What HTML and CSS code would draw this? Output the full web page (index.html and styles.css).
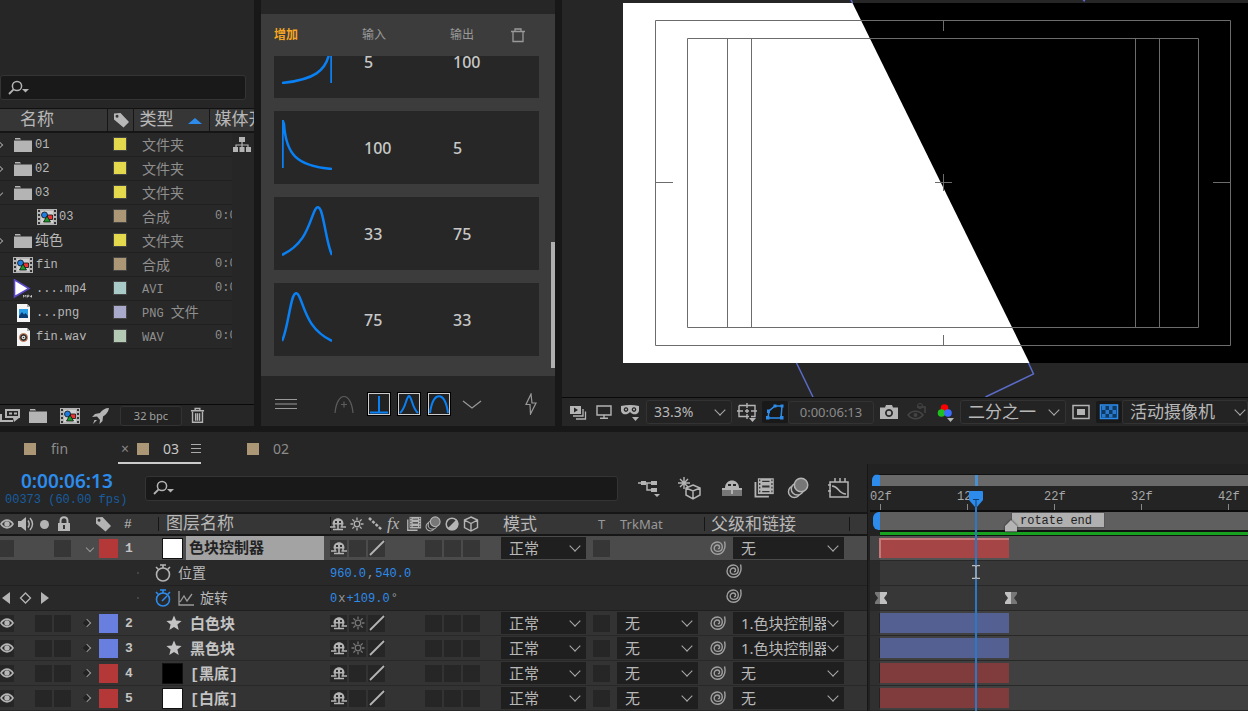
FILE: index.html
```html
<!DOCTYPE html>
<html lang="zh-CN">
<head>
<meta charset="utf-8">
<title>03</title>
<link rel="stylesheet" href="styles.css">
</head>
<body>
<svg class="defs" aria-hidden="true">
  <symbol id="i-search" viewBox="0 0 24 18"><circle cx="10" cy="7" r="4.6" fill="none" stroke="currentColor" stroke-width="1.5"/><path d="M6.6 10.4 2 15" stroke="currentColor" stroke-width="1.8"/><path d="M15 10h7l-3.500 3.500z" fill="currentColor"/></symbol>
  <symbol id="i-tag" viewBox="0 0 18 18"><path fill="currentColor" fill-rule="evenodd" d="M2 2.500 8.500 2 17 11l-5.500 5.500L2 8.500zM5 3.800a1.500 1.500 0 1 0 .01 3 1.500 1.500 0 0 0-.01-3z"/></symbol>
  <symbol id="i-folder" viewBox="0 0 18 16"><path fill="currentColor" d="M1 1h5l1 1.500H1zM0 3.500h18V15H0z"/></symbol>
  <symbol id="i-comp" viewBox="0 0 20 16"><path fill="#b4b4b4" d="M0 0h20v16H0z"/><path stroke="#333" stroke-width="2" stroke-dasharray="2 2" d="M2 1v15M18 1v15"/><path fill="#d0d0d0" d="M4 2h12v12H4z"/><circle cx="7.500" cy="6" r="3" fill="#1e7be0" stroke="#111" stroke-width=".8"/><path fill="#e33" stroke="#111" stroke-width=".8" d="M10.500 6h5v4.500h-5z"/><path fill="#1b9a2c" stroke="#111" stroke-width=".8" d="m10 7 3.500 6h-7z"/></symbol>
  <symbol id="i-flow" viewBox="0 0 18 18"><path fill="currentColor" d="M6 1h6v5H6zM0 11h5v5H0zM6.500 11h5v5h-5zM13 11h5v5h-5z"/><path fill="none" stroke="currentColor" stroke-width="1.200" d="M9 5v6M3 12V9h12v3"/></symbol>
  <symbol id="i-trash" viewBox="0 0 16 18"><path fill="none" stroke="currentColor" stroke-width="1.500" d="M1 4h14M5.500 3.500V1.500h5v2M2.700 5v11.200h10.600V5M6 6.500v8M8 6.500v8M10.200 6.500v8"/></symbol>
  <symbol id="i-eye" viewBox="0 0 16 14"><path fill="currentColor" fill-rule="evenodd" d="M1 7C4.500.8 11.500.8 15 7c-3.500 6.200-10.500 6.200-14 0zm2 0c3 4 7 4 10 0-3-4-7-4-10 0z"/><circle cx="8" cy="7" r="2.700" fill="currentColor"/></symbol>
  <symbol id="i-shy" viewBox="0 0 16 16"><path fill="currentColor" d="M2.500 8.500C2 0 14 0 13.500 8.500z"/><path fill="#303030" d="M5 5h2v2H5zM9 5h2v2H9z"/><path fill="none" stroke="currentColor" stroke-width="1.600" d="M8 8v6M0 11h5.500M10.500 11H16M3 13.500h10M4 8v3M12 8v3"/></symbol>
  <symbol id="i-sun" viewBox="0 0 16 16"><circle cx="8" cy="8" r="2.800" fill="none" stroke="currentColor" stroke-width="1.300"/><path stroke="currentColor" stroke-width="1.300" d="M8 1.500v2.500M8 12v2.500M1.500 8H4M12 8h2.500M3.400 3.400l1.800 1.800M10.800 10.800l1.800 1.800M3.400 12.600l1.800-1.800M10.800 5.200l1.800-1.800"/></symbol>
  <symbol id="i-slash" viewBox="0 0 16 16"><path stroke="currentColor" stroke-width="1.800" d="M1 15 15 1"/></symbol>
  <symbol id="i-frame" viewBox="0 0 18 18"><path fill="none" stroke="currentColor" stroke-width="1.500" d="M2 4v12h11"/><path fill="currentColor" d="M4 1h13v13H4z"/><path fill="#333" d="M7.500 3h6v1h-6zM7.500 7h6v1.500h-6zM7.500 11.500h6v1h-6z"/><path stroke="#333" stroke-width="1" stroke-dasharray="1.500 1.500" d="M5.500 2v11M15.500 2v11"/></symbol>
  <symbol id="i-blur" viewBox="0 0 18 18"><circle cx="6" cy="12" r="4.800" fill="#333" stroke="currentColor" stroke-width="1.200"/><circle cx="8.500" cy="9.800" r="5" fill="#333" stroke="currentColor" stroke-width="1.200"/><circle cx="11.500" cy="6.500" r="5.500" fill="#777" stroke="currentColor" stroke-width="1.200"/></symbol>
  <symbol id="i-cube" viewBox="0 0 16 16"><path fill="none" stroke="currentColor" stroke-width="1.400" d="M8 1l6.500 3v7.500L8 15l-6.500-3.500V4zM1.500 4 8 7.500 14.500 4M8 7.500V15"/></symbol>
  <symbol id="i-whip" viewBox="0 0 16 16"><path fill="none" stroke="currentColor" stroke-width="1.400" d="M14.500 1.500C16.500 9 12.500 14.300 7.500 14.300 3.800 14.300 1 11.700 1 8.200 1 4.500 4 2 7.300 2c3 0 5 2.200 5 5 0 2.800-2 4.400-4.400 4.400-2.300 0-3.700-1.500-3.700-3.200 0-1.900 1.400-3.200 3.100-3.200 1.400 0 2.300 1 2.300 2.200 0 1-.7 1.600-1.700 1.600"/></symbol>
  <symbol id="i-star" viewBox="0 0 16 16"><path fill="currentColor" d="m8 .5 2.100 5.100 5.500.4-4.200 3.600 1.300 5.400L8 12.100 3.300 15l1.300-5.400L.4 6l5.500-.4z"/></symbol>
  <symbol id="i-watch" viewBox="0 0 18 20"><circle cx="9" cy="11.500" r="6.500" fill="none" stroke="currentColor" stroke-width="1.600"/><path stroke="currentColor" stroke-width="1.600" d="M6 2h6M9 2v3M2 4l2.200 2.200M13.800 6.200 16 4"/></symbol>
</svg>

<div class="app">
  <div class="upper">
    <section class="project">
      <label class="search project-search"><svg class="ic-search"><use href="#i-search"/></svg><input type="text" aria-label="搜索"></label>
      <table class="files">
        <colgroup><col class="c-name"><col class="c-tag"><col class="c-type"><col class="c-media"><col class="c-side"></colgroup>
        <thead><tr>
          <th class="h-name">名称</th>
          <th class="h-tag"><svg class="s18"><use href="#i-tag"/></svg></th>
          <th class="h-type">类型<i class="sort"></i></th>
          <th class="h-media" colspan="2">媒体开</th>
        </tr></thead>
        <tbody>
          <tr><td><div class="file"><i class="tw right"></i><svg class="folder"><use href="#i-folder"/></svg>01</div></td><td><i class="sw yellow"></i></td><td class="type">文件夹</td><td></td><td class="side"><svg class="s18"><use href="#i-flow"/></svg></td></tr>
          <tr><td><div class="file"><i class="tw right"></i><svg class="folder"><use href="#i-folder"/></svg>02</div></td><td><i class="sw yellow"></i></td><td class="type">文件夹</td><td></td><td class="side"></td></tr>
          <tr><td><div class="file"><i class="tw down"></i><svg class="folder"><use href="#i-folder"/></svg>03</div></td><td><i class="sw yellow"></i></td><td class="type">文件夹</td><td></td><td class="side"></td></tr>
          <tr><td><div class="file child"><svg class="comp"><use href="#i-comp"/></svg>03</div></td><td><i class="sw tan"></i></td><td class="type">合成</td><td class="media">0:0</td><td class="side"></td></tr>
          <tr><td><div class="file han"><i class="tw right"></i><svg class="folder"><use href="#i-folder"/></svg>纯色</div></td><td><i class="sw yellow"></i></td><td class="type">文件夹</td><td></td><td class="side"></td></tr>
          <tr><td><div class="file item"><svg class="comp"><use href="#i-comp"/></svg>fin</div></td><td><i class="sw tan"></i></td><td class="type">合成</td><td class="media">0:0</td><td class="side"></td></tr>
          <tr><td><div class="file item"><svg class="media-ic" viewBox="0 0 20 20"><path d="M1.500 .800v17L16 9.500z" fill="#fff" stroke="#5a48c8" stroke-width="1.600"/><path d="M10 15.500h9v3.500h-9z" fill="#222"/><path d="M10.500 18.500v-2.500l1.300 1.500 1.200-1.500v2.500M14.500 18.500v-2.300h1.500v1.200h-1.500M18.500 18.500v-2.300l-1.300 1.500h1.800" fill="none" stroke="#ddd" stroke-width=".7"/></svg>....mp4</div></td><td><i class="sw aqua"></i></td><td class="type latin">AVI</td><td class="media">0:0</td><td class="side"></td></tr>
          <tr><td><div class="file item"><svg class="media-ic" viewBox="0 0 20 20"><path d="M4 1h10l3 3v15H4z" fill="#f5f5f5"/><path d="M14 1v3h3" fill="#aaa"/><path d="M6 6h9v9H6z" fill="#2a9fe8"/><path d="m6 13 3-4 2 2.500 1.500-1.500L15 13v2H6z" fill="#0b3d75"/></svg>...png</div></td><td><i class="sw lilac"></i></td><td class="type latin">PNG <span class="han">文件</span></td><td></td><td class="side"></td></tr>
          <tr><td><div class="file item"><svg class="media-ic" viewBox="0 0 20 20"><path d="M4 1h10l3 3v15H4z" fill="#f5f5f5"/><path d="M14 1v3h3" fill="#aaa"/><circle cx="10.500" cy="10.500" r="4" fill="#333" stroke="#d9805c" stroke-width="1"/><circle cx="10.500" cy="10.500" r="1.800" fill="#eee"/><circle cx="10.500" cy="10.500" r=".8" fill="#333"/></svg>fin.wav</div></td><td><i class="sw mint"></i></td><td class="type latin">WAV</td><td class="media">0:0</td><td class="side"></td></tr>
        </tbody>
      </table>
      <footer class="project-foot">
        <button class="pf w19" aria-label="解释素材"><svg class="s20" viewBox="0 0 20 18"><path fill="none" stroke="currentColor" stroke-width="2" d="M6 3h13v7H6zM9 6.500h3M14 6.500h3M1 7v7h12"/><path d="M13 11h6l-5 4z" fill="currentColor"/></svg></button>
        <button class="pf w37" aria-label="新建文件夹"><svg class="folder"><use href="#i-folder"/></svg></button>
        <button class="pf w25" aria-label="新建合成"><svg class="comp"><use href="#i-comp"/></svg></button>
        <button class="pf w37" aria-label="调整"><svg class="s18" viewBox="0 0 18 18"><path fill="currentColor" d="M17 1c-4 0-7 2-9 5L3 7 0 10l5-.5 3 3.500-.5 4 3-3 .5-4.500C14 7.500 16.500 5 17 1zM5 13l-4 4 1.500-4z"/></svg></button>
        <button class="bpc">32 bpc</button>
        <button class="pf w31" aria-label="删除"><svg class="trash"><use href="#i-trash"/></svg></button>
      </footer>
    </section>

    <section class="ease">
      <header class="ease-head"><button class="add">增加</button><span>输入</span><span>输出</span><button class="bin" aria-label="清除"><svg class="s18" viewBox="0 0 18 18"><path fill="none" stroke="currentColor" stroke-width="1.300" d="M2 5.500h14M6 5V3h6v2M4 6v9.500h10V6"/></svg></button></header>
      <div class="ease-list">
        <div class="card"><svg class="curve" viewBox="0 0 50 50"><path d="M0 49C30 46 46 38 48 14L49.500 0V49"/></svg><span>5</span><span>100</span></div>
        <div class="card"><svg class="curve" viewBox="0 0 50 50"><path d="M.5 48V0L2 4C4 34 14 46 50 49"/></svg><span>100</span><span>5</span></div>
        <div class="card"><svg class="curve" viewBox="0 0 50 50"><path d="M0 49C25 37 27 16 33 4q3-6 6 1C43 17 45 39 50 49"/></svg><span>33</span><span>75</span></div>
        <div class="card"><svg class="curve" viewBox="0 0 50 50"><path d="M0 49C5 39 7 17 11 5q3-7 6-1C23 16 25 37 50 49"/></svg><span>75</span><span>33</span></div>
        <i class="thumb"></i>
      </div>
      <footer class="ease-foot">
        <button class="ef w50" aria-label="菜单"><svg class="s22" viewBox="0 0 22 22"><path stroke="currentColor" stroke-width="1.200" d="M0 6.500h22M0 11h22M0 15.500h22"/></svg></button>
        <button class="ef w66 dim" aria-label="添加曲线"><svg class="s22" viewBox="0 0 22 22"><path fill="none" stroke="currentColor" stroke-width="1.200" d="M2 20C4 -2 18 -2 20 20M11 8.500v6M8 11.500h6"/></svg></button>
        <button class="preset" aria-label="预设一"><svg viewBox="0 0 20 20"><path d="M10 2v17M1 18.500h18"/></svg></button>
        <button class="preset" aria-label="预设二"><svg viewBox="0 0 20 20"><path d="M1 19C7 14 7 3 10 2c3 1 3 12 9 17"/></svg></button>
        <button class="preset" aria-label="预设三"><svg viewBox="0 0 20 20"><path d="M1 19C4-3.500 16-3.500 19 19"/></svg></button>
        <button class="ef w40" aria-label="更多"><svg class="s22" viewBox="0 0 22 22"><path fill="none" stroke="currentColor" stroke-width="1.200" d="m2 8 9 7 9-7"/></svg></button>
        <button class="ef bolt" aria-label="应用"><svg class="s22" viewBox="0 0 22 22"><path fill="none" stroke="currentColor" stroke-width="1.200" d="M11 1 6 11.500h4l.5 9.500L16 10h-4z"/></svg></button>
      </footer>
    </section>

    <section class="viewer">
      <svg class="stage">
        <rect x="61" y="3" width="100%" height="360" fill="#fff"/>
        <path d="M290.500 3 467.500 363H2000V3z" fill="#000"/>
        <g fill="none" stroke="#6c6c6c">
          <path d="M93.500 20.500h575v325h-575zM125.500 38.500h511v289h-511zM165.500 38.500v289M189.500 38.500v289M573.500 38.500v289M597.500 38.500v289"/>
          <path d="M381.500 21v10M381.500 335v10M94 182.500h17M651 182.500h17M373 182.500h17M381.500 174v17"/>
        </g>
        <path d="m234.500 363 16.500 34M466.500 363l5 11-48 23M290.500 3 289 0M521 0l2 1" fill="none" stroke="#5a6bc8" stroke-width="1.500"/>
      </svg>
      <footer class="view-foot">
        <button class="vf w32" aria-label="始终预览"><svg class="s18" viewBox="0 0 18 18"><path fill="currentColor" fill-rule="evenodd" d="M1 3h11v8H1zM5 4.500v5l4-2.500z"/><path fill="none" stroke="currentColor" stroke-width="1.300" d="M14 6v7H4M16.500 8.500V16H7"/></svg></button>
        <button class="vf w20" aria-label="主查看器"><svg class="s18" viewBox="0 0 18 18"><path fill="none" stroke="currentColor" stroke-width="1.400" d="M2 3h14v9H2zM5 15.300h8M9 12v3"/></svg></button>
        <button class="vf w32" aria-label="蒙版"><svg class="s20" viewBox="0 0 20 20"><path fill="currentColor" fill-rule="evenodd" d="M1 4q9-2 18 0v5c-1 4-6 4.500-9 1-3 3.500-8 3-9-1zm5 1.300a2.300 2.300 0 1 0 .01 0zm8 0a2.300 2.300 0 1 0 .01 0z"/><circle cx="6" cy="7.600" r="1" fill="currentColor"/><circle cx="14" cy="7.600" r="1" fill="currentColor"/><path fill="currentColor" d="M12 15h7l-3.500 4z"/></svg></button>
        <span class="drop vdrop w86"><select aria-label="缩放"><option>33.3%</option></select></span>
        <button class="vf w30" aria-label="网格"><svg class="s20" viewBox="0 0 20 20"><path fill="none" stroke="currentColor" stroke-width="1.400" d="M2 3.500h16v11h-4M2 3.500v11h10M10 1v5M10 12v5M0 9h6M14 9h6M8 9h4M10 7v4"/><path fill="currentColor" d="M12 16h7l-3.500 4z"/></svg></button>
        <button class="vf w26 on" aria-label="蒙版路径"><svg class="s20" viewBox="0 0 20 20"><path fill="none" stroke="currentColor" stroke-width="1.500" d="M3 16 4 9l6-5h7l-1 12z"/><path fill="currentColor" d="M1 14h3.500v3.500H1zM2 7.500h3V11H2zM8.500 2.500h3v3h-3zM15.500 2.500h3v3h-3zM15 14h3.500v3.500H15z"/></svg></button>
        <button class="time">0:00:06:13</button>
        <button class="vf w30" aria-label="快照"><svg class="s20" viewBox="0 0 20 20"><path fill="currentColor" fill-rule="evenodd" d="M1 5.500h5L7 3h6l1 2.500h5V17H1zM10 7a4 4 0 1 0 .01 0z"/><circle cx="10" cy="11" r="2.300" fill="currentColor"/></svg></button>
        <button class="vf w26 faint" aria-label="显示快照"><svg class="s20" viewBox="0 0 20 20"><path fill="none" stroke="currentColor" stroke-width="1.600" d="M1 13c4-5 11-5 15 0-4 5-11 5-15 0zM10 5h8v6"/><circle cx="8.500" cy="13" r="2" fill="currentColor"/><circle cx="13" cy="4" r="2.500" fill="none" stroke="currentColor"/></svg></button>
        <button class="vf w30" aria-label="通道"><svg class="s20" viewBox="0 0 20 20"><circle cx="9.500" cy="6" r="3.800" fill="#f00"/><circle cx="6.500" cy="11" r="3.800" fill="#1fbf1f"/><circle cx="13" cy="11" r="3.800" fill="#3c6cff"/><path fill="currentColor" d="M12 16h7l-3.500 4z"/></svg></button>
        <span class="drop vdrop w106"><select aria-label="分辨率"><option>二分之一</option></select></span>
        <button class="vf w30" aria-label="目标区域"><svg class="s20" viewBox="0 0 20 20"><path fill="none" stroke="currentColor" stroke-width="1.500" d="M2 3.500h16v13H2z"/><path fill="currentColor" d="M6 7h8v6H6z"/></svg></button>
        <button class="vf w26 on" aria-label="透明网格"><svg class="s20" viewBox="0 0 20 20"><path fill="#0d3964" stroke="currentColor" stroke-width="1.500" d="M1.500 3h17v13.500h-17z"/><path fill="#2b78c8" d="M3 4h3.500v4H3zM10 4h3.500v4H10zM6.500 8H10v4H6.500zM13.500 8H17v4h-3.500zM3 12h3.500v3.500H3zM10 12h3.500v3.500H10z"/></svg></button>
        <span class="drop vdrop last"><select aria-label="视图"><option>活动摄像机</option></select></span>
      </footer>
    </section>
  </div>

  <section class="timeline">
    <nav class="tabs">
      <button class="tab t-fin"><i class="chip"></i>fin</button>
      <button class="tab active"><b class="x">×</b><i class="chip"></i>03<i class="menu"></i></button>
      <button class="tab"><i class="chip"></i>02</button>
    </nav>
    <div class="panes">
      <div class="left">
        <div class="tools">
          <div class="clock"><strong>0:00:06:13</strong><small>00373 (60.00 fps)</small></div>
          <label class="search layer-search"><svg class="ic-search"><use href="#i-search"/></svg><input type="text" aria-label="搜索图层"></label>
          <div class="tool-icons">
            <button aria-label="流程图"><svg class="s24" viewBox="0 0 24 24"><path fill="none" stroke="currentColor" stroke-width="1.500" d="M2 7h13M11 7v7h4"/><path fill="currentColor" d="M5 5h5v4H5zM15 5h6v4h-6zM15 12h6v4h-6zM18 18h6l-3 3z"/></svg></button>
            <button aria-label="草图 3D"><svg class="s24" viewBox="0 0 24 24"><path stroke="currentColor" stroke-width="1.400" d="M7 1v12M1 7h12M3 3l8 8M3 11l8-8"/><path fill="#262626" stroke="currentColor" stroke-width="1.500" d="m16 9 7 3v7l-7 4-7-4v-7zM9 12l7 3 7-3M16 15v8"/></svg></button>
            <button aria-label="隐藏消隐图层"><svg class="s24" viewBox="0 0 24 24"><path fill="#777" d="M2 13h20v7H2z"/><path fill="currentColor" d="M5 12C5 2 19 2 19 12z"/><path fill="#262626" d="M8 8h3v2H8zM13 8h3v2h-3z"/><path fill="none" stroke="currentColor" stroke-width="2" d="M2 13h20M12 12v6"/></svg></button>
            <button aria-label="帧混合"><svg class="s22"><use href="#i-frame"/></svg></button>
            <button aria-label="运动模糊"><svg class="s22"><use href="#i-blur"/></svg></button>
            <button aria-label="图表编辑器"><svg class="s24" viewBox="0 0 24 24"><path fill="none" stroke="currentColor" stroke-width="1.500" d="M3 6h18v15H3zM1 9h3M1 15h3M8 2v4M13 2v4M18 2v4M5 10c7 0 6 8 14 8"/></svg></button>
          </div>
        </div>
        <div class="row head">
          <div class="av"><svg class="eye"><use href="#i-eye"/></svg><svg class="s16" viewBox="0 0 16 16"><path fill="currentColor" d="M0 5h3l5-4v14l-5-4H0z"/><path fill="none" stroke="currentColor" stroke-width="1.400" d="M10 4.500q2.500 3.500 0 7M12 2q5 6 0 12"/></svg><i class="dot"></i><svg class="s16" viewBox="0 0 16 16"><path fill="none" stroke="currentColor" stroke-width="2" d="M4.500 8V5c0-5 7-5 7 0v3"/><path fill="currentColor" fill-rule="evenodd" d="M2 7h12v8H2zM7 9v4h2V9z"/></svg></div>
          <div class="tag"><svg class="s18"><use href="#i-tag"/></svg></div>
          <div class="num">#</div>
          <div class="name bar"><span>图层名称</span></div>
          <div class="sws bar"><svg><use href="#i-shy"/></svg><svg><use href="#i-sun"/></svg><svg viewBox="0 0 16 16"><path stroke="currentColor" stroke-width="2.500" stroke-dasharray="3 1.500" d="M1 2l13 12"/></svg><em>fx</em><svg><use href="#i-frame"/></svg><svg><use href="#i-blur"/></svg><svg viewBox="0 0 16 16"><circle cx="8" cy="8" r="5.800" fill="none" stroke="currentColor" stroke-width="1.500"/><path fill="currentColor" d="M12.500 3.500A6.300 6.300 0 1 1 3.500 12.500z"/></svg><svg><use href="#i-cube"/></svg></div>
          <div class="h-mode">模式</div><div class="h-t">T</div><div class="h-trk">TrkMat</div><div class="h-parent bar">父级和链接</div><div class="h-end bar"></div>
        </div>

        <div class="row layer selected">
          <div class="av"><i class="cell"></i><i></i><i></i><i class="cell"></i></div>
          <div class="twist"><i class="tw down"></i></div><i class="color red"></i><div class="num">1</div>
          <div class="name"><i class="solid white"></i><span>色块控制器</span></div>
          <div class="sws"><i class="cell"><svg><use href="#i-shy"/></svg></i><i class="cell"></i><i class="cell"><svg><use href="#i-slash"/></svg></i><i></i><i></i><i class="cell"></i><i class="cell"></i><i class="cell"></i></div>
          <span class="drop mode"><select aria-label="模式"><option>正常</option></select></span><i class="cell t"></i><i class="trk"></i>
          <svg class="whip"><use href="#i-whip"/></svg><span class="drop parent"><select aria-label="父级"><option>无</option></select></span>
        </div>
        <div class="row prop">
          <div class="nav"></div><i class="speck"></i>
          <div class="pname"><svg class="watch"><use href="#i-watch"/></svg>位置</div>
          <div class="value">960.0<u>,</u>540.0</div><svg class="whip"><use href="#i-whip"/></svg>
        </div>
        <div class="row prop">
          <div class="nav"><svg class="navs" viewBox="0 0 50 14"><path fill="#b4b4b4" d="M10 1v12L2 7zM41 1v12l8-6z"/><path fill="none" stroke="#b4b4b4" stroke-width="1.300" d="m25.500 2 5 5-5 5-5-5z"/></svg></div><i class="speck"></i>
          <div class="pname"><svg class="watch lit" viewBox="0 0 18 20"><use href="#i-watch" width="18" height="20"/><path stroke="currentColor" stroke-width="1.600" d="m8 13 5-5"/></svg><svg class="graph" viewBox="0 0 16 16"><path fill="none" stroke="#999" stroke-width="1.300" d="M1 1v14h15M2 12 6 6l3 5 5-7"/></svg>旋转</div>
          <div class="value">0<u>x</u>+109.0<u>°</u></div><svg class="whip"><use href="#i-whip"/></svg>
        </div>
        <div class="row layer">
          <div class="av"><i class="cell"><svg class="eye"><use href="#i-eye"/></svg></i><i></i><i class="cell"></i><i class="cell"></i></div>
          <div class="twist"><i class="tw right"></i></div><i class="color blue"></i><div class="num">2</div>
          <div class="name"><svg class="star"><use href="#i-star"/></svg><span>白色块</span></div>
          <div class="sws"><i class="cell"><svg><use href="#i-shy"/></svg></i><i class="cell low"><svg><use href="#i-sun"/></svg></i><i class="cell"><svg><use href="#i-slash"/></svg></i><i></i><i></i><i class="cell"></i><i class="cell"></i><i class="cell"></i></div>
          <span class="drop mode"><select aria-label="模式"><option>正常</option></select></span><i class="cell t"></i><span class="drop trk"><select aria-label="轨道遮罩"><option>无</option></select></span>
          <svg class="whip"><use href="#i-whip"/></svg><span class="drop parent"><select aria-label="父级"><option>1.色块控制器</option></select></span>
        </div>
        <div class="row layer">
          <div class="av"><i class="cell"><svg class="eye"><use href="#i-eye"/></svg></i><i></i><i class="cell"></i><i class="cell"></i></div>
          <div class="twist"><i class="tw right"></i></div><i class="color blue"></i><div class="num">3</div>
          <div class="name"><svg class="star"><use href="#i-star"/></svg><span>黑色块</span></div>
          <div class="sws"><i class="cell"><svg><use href="#i-shy"/></svg></i><i class="cell low"><svg><use href="#i-sun"/></svg></i><i class="cell"><svg><use href="#i-slash"/></svg></i><i></i><i></i><i class="cell"></i><i class="cell"></i><i class="cell"></i></div>
          <span class="drop mode"><select aria-label="模式"><option>正常</option></select></span><i class="cell t"></i><span class="drop trk"><select aria-label="轨道遮罩"><option>无</option></select></span>
          <svg class="whip"><use href="#i-whip"/></svg><span class="drop parent"><select aria-label="父级"><option>1.色块控制器</option></select></span>
        </div>
        <div class="row layer">
          <div class="av"><i class="cell"><svg class="eye"><use href="#i-eye"/></svg></i><i></i><i class="cell"></i><i class="cell"></i></div>
          <div class="twist"><i class="tw right"></i></div><i class="color red"></i><div class="num">4</div>
          <div class="name"><i class="solid black"></i><span>[黑底]</span></div>
          <div class="sws"><i class="cell"><svg><use href="#i-shy"/></svg></i><i class="cell"></i><i class="cell"><svg><use href="#i-slash"/></svg></i><i></i><i></i><i class="cell"></i><i class="cell"></i><i class="cell"></i></div>
          <span class="drop mode"><select aria-label="模式"><option>正常</option></select></span><i class="cell t"></i><span class="drop trk"><select aria-label="轨道遮罩"><option>无</option></select></span>
          <svg class="whip"><use href="#i-whip"/></svg><span class="drop parent"><select aria-label="父级"><option>无</option></select></span>
        </div>
        <div class="row layer">
          <div class="av"><i class="cell"><svg class="eye"><use href="#i-eye"/></svg></i><i></i><i class="cell"></i><i class="cell"></i></div>
          <div class="twist"><i class="tw right"></i></div><i class="color red"></i><div class="num">5</div>
          <div class="name"><i class="solid white"></i><span>[白底]</span></div>
          <div class="sws"><i class="cell"><svg><use href="#i-shy"/></svg></i><i class="cell"></i><i class="cell"><svg><use href="#i-slash"/></svg></i><i></i><i></i><i class="cell"></i><i class="cell"></i><i class="cell"></i></div>
          <span class="drop mode"><select aria-label="模式"><option>正常</option></select></span><i class="cell t"></i><span class="drop trk"><select aria-label="轨道遮罩"><option>无</option></select></span>
          <svg class="whip"><use href="#i-whip"/></svg><span class="drop parent"><select aria-label="父级"><option>无</option></select></span>
        </div>
      </div>

      <div class="right">
        <div class="navigator"><i class="needle"></i></div>
        <div class="ruler"><span>02f</span><span>12f</span><span>22f</span><span>32f</span><span>42f</span></div>
        <div class="work"></div>
        <div class="cache"></div>
        <div class="track sel"><i class="clip c-sel"></i></div>
        <div class="track sub"></div>
        <div class="track sub keys"><svg class="kf first" viewBox="0 0 12 14"><path fill="#777" d="M0 1h6v12H0v-2L3 7 0 3z"/><path fill="#c0c0c0" d="M12 1H5v12h7v-2L9 7l3-4z"/></svg><svg class="kf" viewBox="0 0 12 14"><path fill="#c0c0c0" d="M0 1h6v12H0v-2L3 7 0 3z"/><path fill="#777" d="M12 1H6v12h6v-2L9 7l3-4z"/></svg></div>
        <div class="track"><i class="clip c-blue"></i></div>
        <div class="track"><i class="clip c-blue"></i></div>
        <div class="track"><i class="clip c-red"></i></div>
        <div class="track"><i class="clip c-red"></i></div>
        <div class="marker"><svg viewBox="0 0 12 12"><path fill="#b4b4b4" d="m6 0 6 6v5.500H0V6z"/></svg><span>rotate end</span></div>
        <div class="playhead"><svg viewBox="0 0 14 17"><path fill="#2d8ceb" d="M1 0h12q1 0 1 1v8l-6 7H6L0 9V1q0-1 1-1z"/><path stroke="#123f70" d="M4 8.500h6M7 9v7"/></svg></div>
        <svg class="ibeam" viewBox="0 0 10 14"><path fill="none" stroke="#bbb" stroke-width="1.200" d="M1 .7h3l1 1 1-1h3M5 2v10M1 13.300h3l1-1 1 1h3"/></svg>
      </div>
    </div>
  </section>
</div>
</body>
</html>
```
FILE: styles.css
```css
* { box-sizing: border-box; }
body {
  margin: 0;
  background: #181818;
  color: #b8b8b8;
  font: 14px/18px "Noto Sans", "Noto Sans CJK SC", sans-serif;
  overflow: hidden;
}
button, select, input { font: inherit; color: inherit; border: 0; padding: 0; margin: 0; background: none; border-radius: 0; }
i { font-style: normal; }
svg { display: block; flex: none; }
.defs { position: absolute; width: 0; height: 0; }
.s16 { width: 16px; height: 16px; }
.s18 { width: 18px; height: 18px; }
.s20 { width: 20px; height: 20px; }
.s22 { width: 22px; height: 22px; }
.s24 { width: 24px; height: 24px; }
.app { display: flex; flex-direction: column; gap: 6px; min-height: 100vh; }
.upper { display: grid; grid-template-columns: 254px 294px 1fr; grid-template-rows: 426px; gap: 7px; }

.search { display: flex; align-items: center; height: 25px; background: #191919; border: 1px solid #343434; border-radius: 3px; color: #b4b4b4; }
.search input { flex: 1; min-width: 0; height: 100%; outline: 0; }
.ic-search { width: 24px; height: 18px; }

/* twist arrows */
.tw { display: block; width: 6px; height: 6px; border: solid #999; border-width: 1px 1px 0 0; transform: rotate(45deg); }
.tw.down { transform: rotate(135deg); }

/* project */
.project { background: #262626; display: flex; flex-direction: column; overflow: hidden; }
.project-search { margin: 75px 8px 8px 0; padding-left: 6px; }
.files { width: 100%; table-layout: fixed; border-collapse: collapse; border-top: 1px solid #111; font: 12px/18px "Liberation Mono", "Noto Sans CJK SC", monospace; }
.c-name { width: 107px; } .c-tag { width: 26px; } .c-type { width: 76px; } .c-media { width: 23px; }
.files th { height: 23px; padding: 2px 0 0; background: #363636; border-bottom: 2px solid #151515; font-size: 17px; line-height: 20px; font-weight: 400; text-align: left; overflow: hidden; white-space: nowrap; }
.files th + th { border-left: 1px solid #161616; }
.files .h-name { padding-left: 20px; }
.files .h-tag { padding: 0 0 0 4px; }
.files .h-type { padding-left: 6px; }
.files .h-media { padding-left: 5px; }
.sort { display: inline-block; margin-left: 14px; vertical-align: middle; border: 7px solid transparent; border-top: 0; border-bottom: 6px solid #2d8ceb; }
.files td { height: 24px; padding: 0; background: #282828; border-bottom: 1px solid #202020; overflow: hidden; white-space: nowrap; }
.file { display: flex; align-items: center; gap: 3px; padding-top: 1px; }
.file .tw { margin: 0 9px 0 -4px; }
.file .tw.down { border-color: #999; }
.file.item { padding-left: 13px; }
.file.child { padding-left: 37px; gap: 2px; }
.han { font-size: 14px; }
.folder { width: 18px; height: 16px; color: #b4b4b4; }
.comp { width: 20px; height: 16px; }
.media-ic { width: 20px; height: 20px; }
.sw { display: block; width: 12px; height: 12px; margin-left: 7px; outline: 1px solid #444; }
.yellow { background: #e4d84c; } .tan { background: #ab9776; } .aqua { background: #a9cbc8; } .lilac { background: #a9a9cc; } .mint { background: #b3c9b3; }
.files .type { padding: 3px 0 0 9px; color: #8f8f8f; font-size: 14px; }
.files .latin { font-size: 12px; }
.files .media { padding-left: 6px; color: #8f8f8f; }
.files .side { background: #262626; border: 0; color: #b4b4b4; }
.side svg { margin-left: 1px; }
.project-foot { margin-top: auto; display: flex; height: 22px; border-top: 1px solid #090909; align-items: center; }
.pf, .ef, .vf { display: flex; align-items: center; justify-content: center; color: #b4b4b4; }
.w19 { width: 19px; } .w37 { width: 38px; } .w25 { width: 25px; } .w31 { width: 31px; }
.bpc { width: 62px; height: 20px; border: 1px solid #333; border-radius: 3px; background: #222; font-size: 11px; color: #a0a0a0; }
.trash { width: 15px; height: 17px; }

/* easing panel */
.ease { background: #3c3c3c; border-top: 14px solid #262626; display: flex; flex-direction: column; min-height: 0; }
.ease-head { flex: none; display: grid; grid-template-columns: 88px 88px 59px 20px; padding-left: 13px; height: 42px; align-items: center; font-size: 12px; color: #999; }
.add { color: #f5a623; font-weight: 700; text-align: left; }
.bin { color: #999; }
.ease-list { position: relative; flex: 1; min-height: 0; overflow: hidden; display: flex; flex-direction: column; justify-content: flex-end; gap: 13px; padding: 0 16px 20px 13px; }
.card { flex: none; display: grid; grid-template-columns: 82px 89px 1fr; align-items: center; height: 73px; padding-left: 8px; background: #272727; font-size: 16px; font-weight: 500; color: #c8c8c8; }
.curve { width: 50px; height: 50px; margin-bottom: 6px; fill: none; stroke: #0a80f5; stroke-width: 2.500px; }
.thumb { position: absolute; right: 0; bottom: 8px; width: 4px; height: 126px; background: #b0b0b0; }
.ease-foot { flex: none; display: flex; height: 50px; padding-top: 5px; align-items: center; background: #262626; }
.ef { color: #999; }
.w50 { width: 50px; } .w66 { width: 66px; margin-right: -9px; } .w40 { width: 40px; }
.dim { color: #5c5c5c; }
.preset { width: 22px; height: 22px; margin-right: 8px; border: 1px solid #ccc; outline: 1px solid #000; background: #222; }
.preset svg { width: 20px; height: 20px; fill: none; stroke: #0a80f5; stroke-width: 2px; }
.preset + .ef { margin-left: -6px; }
.bolt { margin-left: auto; margin-right: 13px; }

/* viewer */
.viewer { background: #262626; display: flex; flex-direction: column; min-width: 0; min-height: 0; overflow: hidden; }
.stage { flex: 1; width: 100%; min-height: 0; }
.view-foot { flex: none; display: flex; align-items: center; height: 29px; border-top: 1px solid #090909; font-size: 14px; }
.w20 { width: 20px; } .w26 { width: 26px; } .w30 { width: 30px; } .w32 { width: 32px; } .w86 { width: 86px; } .w106 { width: 106px; }
.vf { flex: none; height: 22px; }
.on { background: #191919; color: #2d8ceb; border-radius: 2px; }
.faint { color: #444; }
.time { flex: none; width: 86px; height: 23px; border: 1px solid #333; border-radius: 3px; font-size: 13px; color: #8a8a8a; }

.drop { position: relative; display: block; min-width: 0; flex: none; background: #1f1f1f; }
.drop select { display: block; appearance: none; width: 100%; height: 100%; padding: 0 18px 0 8px; outline: 0; }
.drop::after { content: ""; position: absolute; right: 7px; top: 50%; width: 7px; height: 7px; margin-top: -6px; border: solid #aaa; border-width: 0 1px 1px 0; transform: rotate(45deg); pointer-events: none; }
.vdrop { height: 24px; border: 1px solid #333; border-radius: 3px; background: #232323; font-size: 14px; }
.vdrop select { padding-left: 7px; }
.vdrop.w106, .vdrop.last { font-size: 17px; }
.vdrop.last { flex: 1; }
.vdrop.last::after { right: 3px; }

/* timeline */
.timeline { flex: 1; display: flex; flex-direction: column; background: #262626; }
.tabs { display: flex; height: 32px; padding-left: 24px; align-items: center; }
.tab { display: flex; align-items: center; height: 32px; gap: 14px; color: #8c8c8c; border-bottom: 2px solid transparent; padding-top: 3px; }
.t-fin { width: 94px; gap: 15px; }
.tab.active { width: 83px; margin-right: 46px; gap: 0; color: #c8c8c8; border-color: #ccc; padding-left: 3px; }
.tab.active .chip { margin: 0 14px 0 8px; }
.x { font-weight: 400; color: #888; width: 8px; }
.chip { width: 12px; height: 12px; background: #ab9776; }
.menu { width: 10px; height: 9px; margin-left: auto; border: solid #aaa; border-width: 1px 0; background: linear-gradient(#aaa, #aaa) center / 10px 1px no-repeat; }
.panes { display: grid; grid-template-columns: 868px 1fr; flex: 1; }
.left { min-width: 0; border-right: 1px solid #161616; }
.tools { display: flex; height: 50px; border-bottom: 2px solid #161616; align-items: center; }
.clock { width: 145px; padding: 2px 0 0 5px; }
.clock strong { display: block; padding-left: 16px; font-size: 19px; line-height: 22px; font-weight: 600; color: #2d8ceb; }
.clock small { display: block; font: 12px/16px "Liberation Mono", monospace; color: #175d9f; white-space: nowrap; }
.layer-search { width: 473px; padding-left: 6px; }
.tool-icons { flex: 1; display: grid; grid-template-columns: 41px 43px 33px 34px 40px 42px; padding-left: 12px; align-items: center; }
.tool-icons button { display: flex; width: 100%; padding-left: 6px; color: #b4b4b4; }

.row { display: flex; align-items: center; height: 25px; background: #333; border-bottom: 1px solid #282828; }
.row > * { flex: none; }
.row.head { height: 22px; background: #363636; border-bottom: 2px solid #161616; color: #b8b8b8; }
.bar { background: linear-gradient(#161616, #161616) left center / 1px 14px no-repeat; }
.av { display: grid; grid-template-columns: 16px 19px 19px 24px; width: 78px; align-items: center; }
.head .av > .s16 { margin-left: 2px; }
.eye { width: 16px; height: 14px; margin-left: -1px; color: #b4b4b4; }
.dot { width: 9px; height: 9px; margin-left: 5px; border-radius: 50%; background: #b4b4b4; }
.cell { width: 17px; height: 17px; background: #262626; display: flex; align-items: center; justify-content: center; color: #b4b4b4; }
.av .cell:first-child { width: 14px; }
.selected .cell { background: #363636; }
.tag { width: 40px; padding-left: 16px; }
.head .tag { color: #b4b4b4; }
.twist { width: 21px; padding-left: 6px; }
.row .twist .tw.down { margin-left: 3px; }
.color { width: 19px; height: 19px; }
.red { background: #b43838; } .blue { background: #697fe0; }
.num { width: 40px; padding: 2px 0 0 7px; font: 700 13px/18px "Liberation Mono", monospace; color: #c4c4c4; }
.head .num { padding-left: 6px; font-weight: 400; }
.name { width: 172px; height: 24px; padding-left: 4px; display: flex; align-items: center; font: 700 15px/20px "Liberation Mono", "Noto Sans CJK SC", monospace; color: #c4c4c4; }
.name span { flex: 1; padding: 6px 0 0 7px; }
.head .name { height: 20px; font-size: 17px; font-weight: 400; color: #b8b8b8; }
.head .name span { padding: 2px 0 0 4px; }
.selected { background: #4b4b4b; }
.selected .name span { background: #a3a3a3; color: #222; height: 24px; margin: 0 6px 0 3px; padding: 4px 0 0 3px; }
.solid { width: 21px; height: 21px; border: 1px solid #111; }
.white { background: #fff; } .black { background: #000; }
.star { width: 16px; height: 16px; margin: 0 1px 0 4px; }
.sws { display: grid; grid-template-columns: repeat(8, 19px); width: 171px; align-items: center; color: #b4b4b4; }
.sws svg { width: 16px; height: 16px; }
.sws em { font: italic 17px/18px "Liberation Serif", serif; }
.low { color: #777; }
.drop.mode, .drop.trk, .drop.parent { height: 22px; font-size: 15px; line-height: 20px; }
.mode { width: 85px; margin-right: 7px; }
.trk { width: 81px; margin-left: 7px; }
.cell.t { width: 17px; }
.whip { width: 16px; height: 16px; margin: 0 7px 0 12px; color: #a0a0a0; }
.parent { width: 111px; }
.h-mode { width: 97px; padding-left: 2px; font-size: 17px; }
.h-t { width: 20px; }
.h-trk { width: 86px; padding-left: 2px; }
.h-parent { width: 145px; padding-left: 7px; font-size: 17px; }
.h-end { flex: 1; height: 16px; }
.h-trk, .h-t { color: #999; font-size: 13px; }

.prop { background: #292929; border-color: #202020; }
.prop .whip { margin-bottom: 5px; }
.nav { width: 137px; }
.navs { width: 50px; height: 14px; }
.speck { width: 2px; height: 2px; background: #444; }
.pname { display: flex; align-items: center; width: 191px; padding-left: 15px; gap: 6px; font-size: 14px; }
.watch { width: 18px; height: 20px; color: #b4b4b4; }
.lit { color: #2d8ceb; }
.graph { width: 16px; height: 16px; }
.value { width: 384px; padding-top: 2px; font: 12px/18px "Liberation Mono", monospace; color: #2d8ceb; }
.value u { text-decoration: none; color: #999; padding: 0 1px; }

/* tracks */
.right { position: relative; min-width: 0; overflow: hidden; padding-left: 2px; background: #222; }
.navigator { height: 12px; margin: 10px 0 0 2px; padding-left: 95px; border-left: 8px solid #2d8ceb; border-top-left-radius: 6px; background: #696969; border-top: 1px solid #111; }
.needle { display: block; width: 3px; height: 11px; background: #4a90d0; }
.ruler { display: flex; height: 26px; border-bottom: 2px solid #0d0d0d; font: 12px/22px "Liberation Mono", monospace; color: #a8a8a8; background: #242424; }
.ruler span { flex: none; width: 87px; background: linear-gradient(#888, #888) 10px 18px / 1px 6px no-repeat; }
.work { height: 18px; margin-left: 3px; border-left: 7px solid #2d8ceb; border-radius: 6px 0 0 6px; background: #5f5f5f; }
.cache { height: 6px; margin-left: 10px; border: solid #111; border-width: 2px 0 1px; background: #18a020; }
.track { height: 25px; border-bottom: 1px solid #282828; background: linear-gradient(90deg, #303030 10px, #404040 10px); display: flex; align-items: center; padding-left: 9px; }
.track.sel { background: linear-gradient(90deg, #454545 10px, #525252 10px); }
.track.sub { background: linear-gradient(90deg, #2a2a2a 10px, #373737 10px); }
.clip { width: 130px; height: 20px; border-left: 1px solid #222; }
.c-sel { background: #a64545; border: solid #c47a7a; border-width: 2px 0 0 2px; }
.c-blue { background: #545f92; } .c-red { background: #803c3c; }
.kf { width: 12px; height: 14px; }
.kf.first { margin: 0 118px 0 -4px; }
.marker { position: absolute; left: 137px; top: 48px; display: flex; align-items: flex-end; }
.marker svg { width: 12px; height: 12px; margin-bottom: -4px; z-index: 1; filter: drop-shadow(0 0 1px #222); }
.marker span { margin-left: -6px; width: 94px; height: 16px; padding-left: 8px; background: #b0b0b0; border: 1px solid #555; color: #222; font: 12px/16px "Liberation Mono", monospace; }
.playhead { position: absolute; left: 101px; top: 27px; bottom: 0; width: 14px; background: linear-gradient(#2d78c4, #2d78c4) center / 2px 100% no-repeat; }
.playhead svg { width: 14px; height: 17px; }
.ibeam { position: absolute; left: 103px; top: 101px; width: 10px; height: 14px; }
```
